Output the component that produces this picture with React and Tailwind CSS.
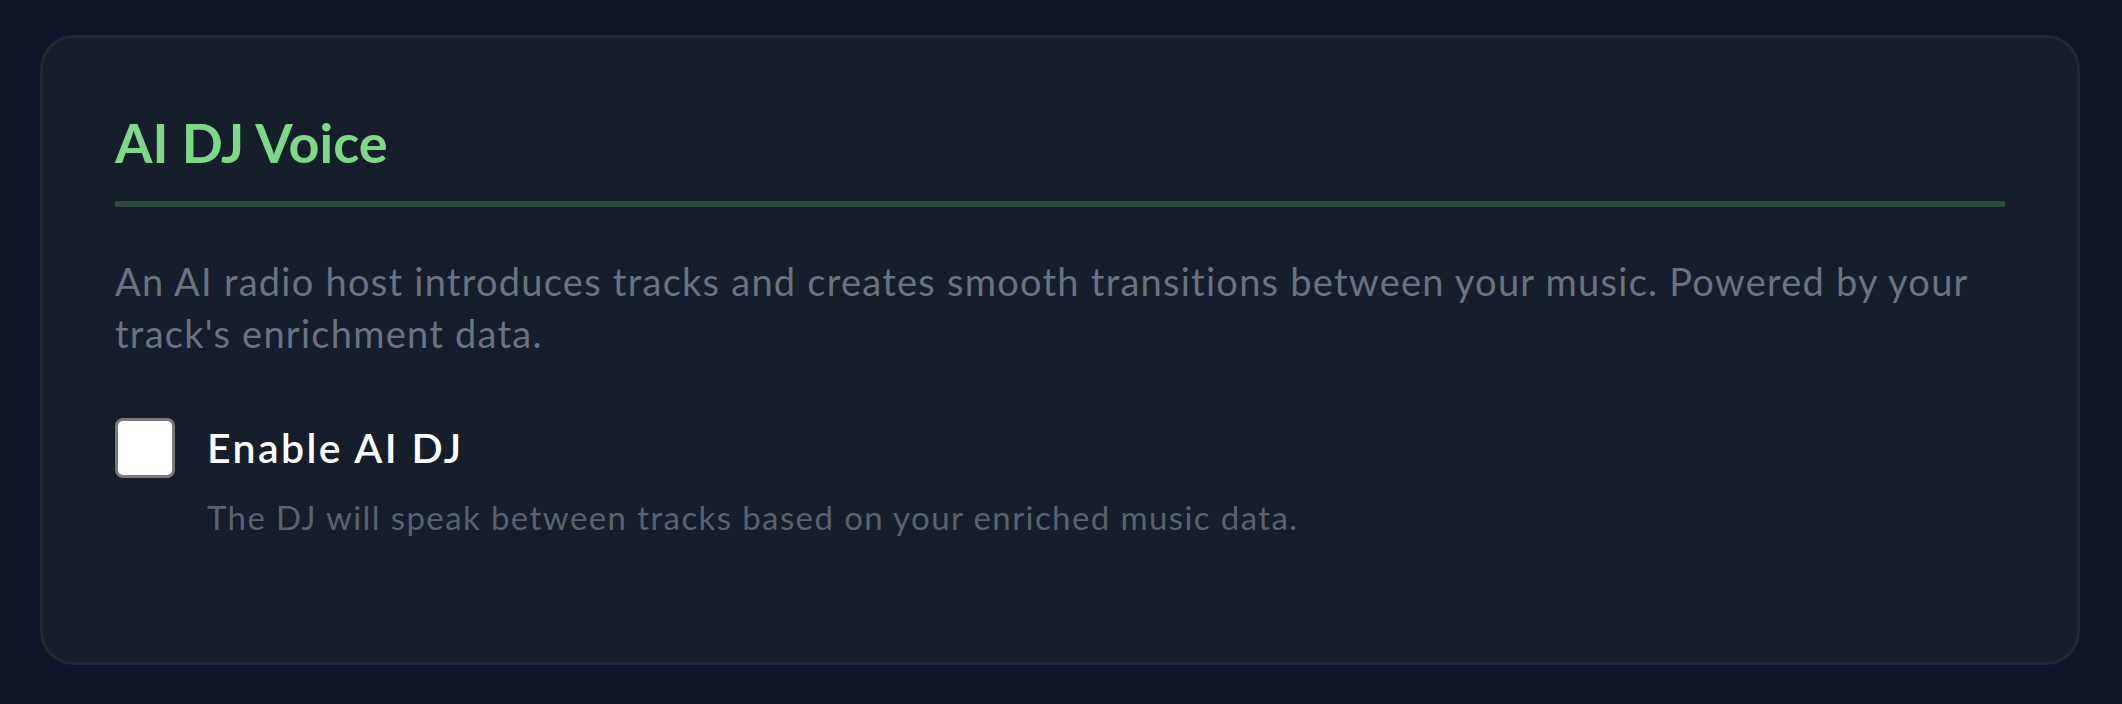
import { useState } from "react";

export default function App() {
    const [enabled, setEnabled] = useState(false)

    return (
        <div className="min-h-[704px] bg-[#0f1428] pl-10 pr-[42px] pt-[35px] pb-[38px] font-['Lato',_sans-serif]">
            <section className="rounded-[34px] border-[3px] border-[#1d2a2f] bg-[#151e2a] px-[72px] pt-[78px] pb-[121px]">
                <h2 className="border-b-[6px] border-[#2b4a3d] pb-[31px] text-[54px] font-bold leading-[54px] text-[#7ed888]">
                    AI DJ Voice
                </h2>

                <p className="mt-[48px] text-[38px] leading-[52px] tracking-[1.25px] text-[#6b7280]">
                    An AI radio host introduces tracks and creates smooth transitions between your music. Powered by your track's enrichment data.
                </p>

                <label className="mt-[59px] flex items-center gap-8 cursor-pointer">
                    <span
                        onClick={() => setEnabled(!enabled)}
                        className="h-[60px] w-[60px] shrink-0 rounded-[8px] border-[3px] border-[#7a7a7a] bg-white"
                    />
                    <span className="text-[41px] font-semibold leading-[60px] tracking-[2.4px] text-white">Enable AI DJ</span>
                </label>

                <p className="mt-[15px] ml-[92px] text-[33px] leading-[48px] tracking-[1.4px] text-[#5a626d]">
                    The DJ will speak between tracks based on your enriched music data.
                </p>
            </section>
        </div>
    )
}
